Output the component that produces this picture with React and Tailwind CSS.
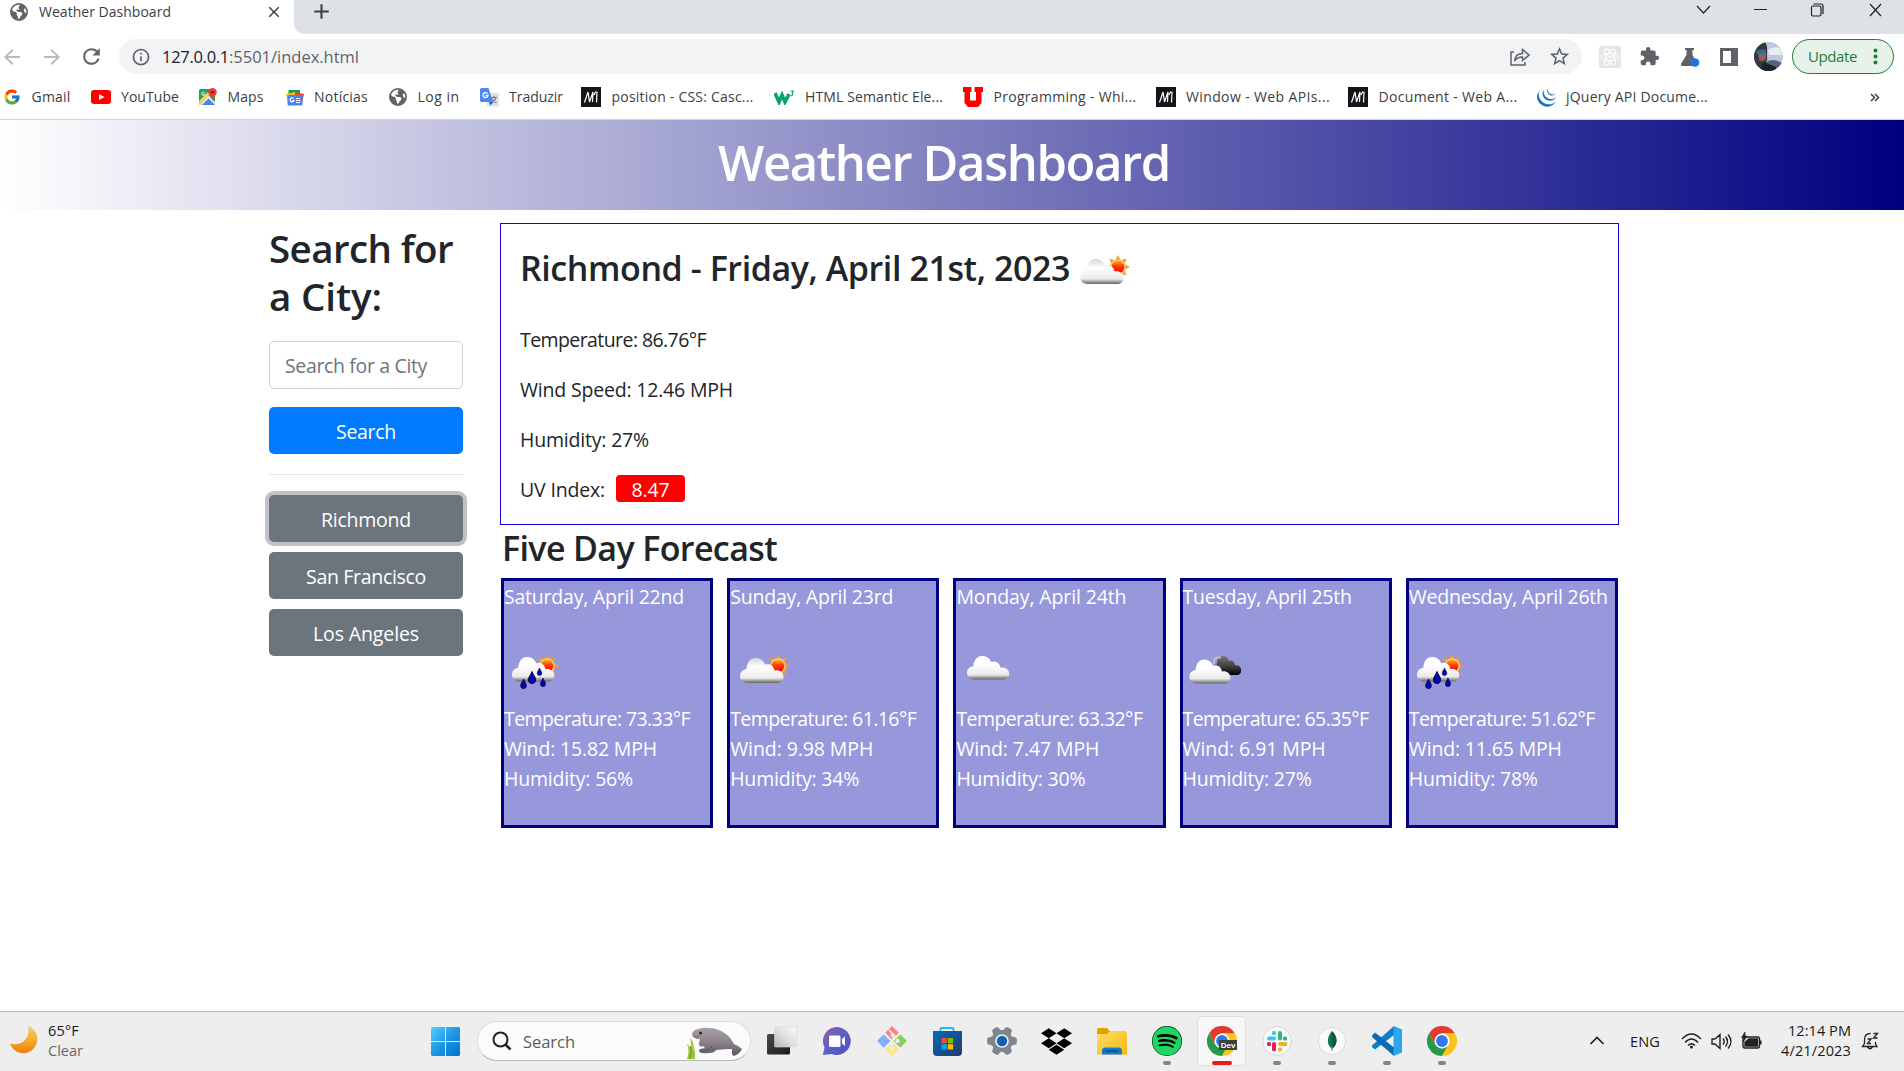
import { useId, useLayoutEffect, useRef, useState } from "react";
import { FcGoogle } from "react-icons/fc";
import { FaDropbox, FaSpotify } from "react-icons/fa";
import { FaEarthAmericas } from "react-icons/fa6";
import {
  MdArrowBack, MdArrowForward, MdClose, MdAdd, MdRefresh, MdInfoOutline, MdStarBorder, MdExtension,
} from "react-icons/md";
import { SiJquery } from "react-icons/si";

/* A single line of text spaced out to an exact width. */
function T({ w, className = "", children }) {
  const ref = useRef(null);
  const [ls, setLs] = useState(0);
  useLayoutEffect(() => {
    const natural = ref.current.getBoundingClientRect().width;
    setLs((w - natural) / Math.max(1, String(children).length));
  }, [w, children]);
  return (
    <span className={`block shrink-0 whitespace-nowrap ${className}`} style={{ width: w }}>
      <span ref={ref} className="inline-block" style={{ letterSpacing: ls }}>{children}</span>
    </span>
  );
}

/* ---------- weather icons ---------- */
const CLOUD = "M8 25C3 25 0 22 0 18C0 14 3 11.500 6.500 11C7 4.500 10 0 15.500 0C20.500 0 23.500 2.500 25 6.500C29.500 4.500 34 8 34.500 12.500C39 11.500 43.500 14 43.500 19C43.500 22.500 41 25 37.500 25Z";

function WeatherIcon({ kind }) {
  const id = useId();
  const sun = kind === "rain" ? [43, 26] : [48, 26];
  const hasSun = kind === "rain" || kind === "partly";
  const place = { rain: "translate(8 17) scale(.97 .98)", partly: "translate(10 18)", cloud: "translate(11 16) scale(.97 .94)", broken: "translate(6.500 19.500) scale(.94 .96)" }[kind];
  return (
    <svg width="62" height="62" viewBox="0 0 62 62" className="block shrink-0">
      <defs>
        <linearGradient id={id + "c"} x1="0" y1="0" x2="0" y2="1">
          <stop offset="0" stopColor={kind === "partly" ? "#d8d8d8" : "#ffffff"} />
          <stop offset=".35" stopColor="#ffffff" />
          <stop offset=".8" stopColor="#eaeaea" />
          <stop offset=".9" stopColor="#a5a5a5" />
          <stop offset="1" stopColor="#666666" />
        </linearGradient>
        <linearGradient id={id + "s"} x1="0" y1="0" x2="0" y2="1">
          <stop offset="0" stopColor="#ffb400" />
          <stop offset=".45" stopColor="#ff3a00" />
          <stop offset="1" stopColor="#f00000" />
        </linearGradient>
        <linearGradient id={id + "d"} x1="0" y1="0" x2="0" y2="1">
          <stop offset="0" stopColor="#777" />
          <stop offset=".5" stopColor="#444" />
          <stop offset="1" stopColor="#000" />
        </linearGradient>
      </defs>
      {hasSun && (
        <g transform={`translate(${sun[0]} ${sun[1]})`}>
          {[0, 45, 90, 135, 180, 225, 270, 315].map((a) => (
            <path key={a} d="M-2.500 -7L0 -12L2.500 -7Z" fill="#f5a01c" transform={`rotate(${a})`} />
          ))}
          <circle r="7.800" fill="#f9c487" />
          <circle r="6.300" fill={`url(#${id}s)`} />
        </g>
      )}
      {kind === "broken" && <path d={CLOUD} fill={`url(#${id}d)`} transform="translate(29.500 16) scale(.66 .76)" />}
      {kind === "broken" && <path d="M31 24C30 19 34 16 38 18" fill="none" stroke="#c8c8c8" strokeWidth="1.500" />}
      <path d={CLOUD} fill={`url(#${id}c)`} transform={place} />
      {kind === "rain" &&
        [[19.500, 39, 0.95], [28, 31.500, 1.200], [35.500, 28, 0.75], [39, 38, 0.85]].map(([x, y, s]) => (
          <path key={x} d="M0 0C1 3 3 4.500 3 7A3 3 0 0 1 -3 7C-3 4.500 -1 3 0 0Z" fill="#0505a8" stroke="#00004f" strokeWidth=".8" transform={`translate(${x} ${y}) scale(${s})`} />
        ))}
    </svg>
  );
}

/* ---------- bookmark icons ---------- */
const YouTube = () => (
  <svg width="20" height="14" viewBox="0 0 20 14"><rect width="20" height="14" rx="3" fill="#f00" /><path d="M8 4L13.500 7L8 10Z" fill="#fff" /></svg>
);
const Maps = () => (
  <svg width="18" height="18" viewBox="0 0 18 18">
    <rect y="1" width="16" height="16" rx="1.500" fill="#1fa463" />
    <path d="M0 16L9 7L16 14V17H1Z" fill="#e8e8e8" />
    <path d="M3 17L9.500 10.500L16 17Z" fill="#4285f4" />
    <path d="M0 13L9 4L11 6L1 17H0Z" fill="#ffd04b" />
    <path d="M13.500 0A4.300 4.300 0 0 1 17.800 4.300C17.800 7.500 14 8.500 13.500 13C13 8.500 9.200 7.500 9.200 4.300A4.300 4.300 0 0 1 13.500 0Z" fill="#ea4335" />
    <circle cx="13.500" cy="4.300" r="1.500" fill="#8c1b12" />
    <path d="M5.500 4.500A1.700 1.700 0 1 0 6 6H4.500" stroke="#fff" strokeWidth=".9" fill="none" />
  </svg>
);
const News = () => (
  <svg width="18" height="17" viewBox="0 0 18 17">
    <path d="M2.500 1H14V7H2.500Z" fill="#0f9d58" /><path d="M0 5L9 3V12L1.500 12Z" fill="#fbbc04" /><path d="M18 5L9 3V12L16.500 12Z" fill="#ea4335" />
    <rect x="1.500" y="6" width="15" height="10.500" rx="1.500" fill="#4285f4" />
    <path d="M7.500 9.500A2 2 0 1 0 8 11.500H6.200M10 9.500H14M10 11.500H14.500M10 13.500H14" stroke="#fff" strokeWidth="1.200" fill="none" />
  </svg>
);
const Translate = () => (
  <svg width="19" height="19" viewBox="0 0 19 19">
    <rect x="7" y="5" width="12" height="13.500" rx="1.500" fill="#dfe1e5" />
    <path d="M11 9.500H17M14 8V9.500M16 9.500C15.500 12 13.500 14 12 15M12.500 11C13.500 13 15 14.500 16.500 15" stroke="#6b7177" strokeWidth="1.100" fill="none" />
    <path d="M1.500 0H8.500L13 14H1.500A1.500 1.500 0 0 1 0 12.500V1.500A1.500 1.500 0 0 1 1.500 0Z" fill="#4d88f1" />
    <path d="M9 14H13L10.500 17.500Z" fill="#2a56c6" />
    <path d="M7.500 5.500A2.500 2.500 0 1 0 8 7.500H5.500" stroke="#fff" strokeWidth="1.300" fill="none" />
  </svg>
);
const Mdn = () => (
  <svg width="20" height="20" viewBox="0 0 20 20"><rect width="20" height="20" fill="#15141a" /><path d="M3.500 15.500L7 5L8.500 15L12 5L11.500 15M13 8L14.500 5H16L15.500 15.500" stroke="#fff" strokeWidth="1.200" fill="none" strokeLinejoin="bevel" /></svg>
);
const W3 = () => (
  <svg width="21" height="15" viewBox="0 0 21 15"><path d="M1 3L5 12L8 5L11 12L15 4" stroke="#04a56c" strokeWidth="3.600" fill="none" /><path d="M16.500 1H19.500L18 3A1.400 1.400 0 1 1 16.500 5.500" stroke="#04a56c" strokeWidth="1.100" fill="none" /></svg>
);
const UIcon = () => (
  <svg width="20" height="20" viewBox="0 0 20 20"><path d="M0 0H8.500V5H7V13.500H13V5H11.500V0H20V5H18.500V16L15 20H5L1.500 16V5H0Z" fill="#f00" /></svg>
);
const Globe = () => <FaEarthAmericas size={18} color="#5f6368" />;

const bookmarks = [
  { x: "ml-[3px]", Icon: () => <FcGoogle size={18} />, t: "Gmail", w: 39 },
  { x: "ml-[20px]", Icon: YouTube, t: "YouTube", w: 58 },
  { x: "ml-[20px]", Icon: Maps, t: "Maps", w: 36 },
  { x: "ml-[22px]", Icon: News, t: "Notícias", w: 54 },
  { x: "ml-[21px]", Icon: Globe, t: "Log in", w: 42 },
  { x: "ml-[20px]", Icon: Translate, t: "Traduzir", w: 54 },
  { x: "ml-[18px]", Icon: Mdn, t: "position - CSS: Casc...", w: 142 },
  { x: "ml-[20px]", Icon: W3, t: "HTML Semantic Ele...", w: 138 },
  { x: "ml-[20px]", Icon: UIcon, t: "Programming - Whi...", w: 143 },
  { x: "ml-[19px]", Icon: Mdn, t: "Window - Web APIs...", w: 144 },
  { x: "ml-[18px]", Icon: Mdn, t: "Document - Web A...", w: 139 },
  { x: "ml-[19px]", Icon: () => <SiJquery size={19} color="#1b75bb" />, t: "jQuery API Docume...", w: 142 },
];

function Browser() {
  return (
    <header className="bg-white">
      <div className="flex h-[34px] bg-[#dee1e6]">
        <div className="flex h-[34px] w-[294px] shrink-0 bg-white">
          <div className="mt-[3px] ml-[10px]"><Globe /></div>
          <T w={132} className="ml-[11px] h-6 text-[14px] leading-6 text-[#3c4043]">Weather Dashboard</T>
          <MdClose size={18} className="mt-[3px] ml-[94px] text-[#3c4043]" />
        </div>
        <div className="flex grow bg-white">
          <div className="flex grow rounded-bl-[10px] bg-[#dee1e6]">
            <MdAdd size={25} className="-mt-px ml-[15px] text-[#3c4043]" />
            <svg className="mt-[3px] ml-auto mr-[22px]" width="187" height="15" viewBox="0 0 187 15" fill="none" stroke="#222" strokeWidth="1.200">
              <path d="M2 3L8.500 10L15 3M59 6.500H72M175 1L186 13M186 1L175 13" />
              <rect x="116.500" y="3" width="9.500" height="10" rx="1.500" />
              <path d="M118.500 1H126A2 2 0 0 1 128 3V11" />
            </svg>
          </div>
        </div>
      </div>
      <div className="flex h-[45px] items-center">
        <MdArrowBack size={24} className="shrink-0 text-[#babcbe]" />
        <MdArrowForward size={24} className="ml-4 shrink-0 text-[#babcbe]" />
        <MdRefresh size={25} className="ml-[15px] shrink-0 text-[#5f6368]" />
        <div className="ml-[15px] flex h-[35px] w-[1463px] shrink-0 items-center rounded-full bg-[#f1f3f4] text-[#5f6368]">
          <MdInfoOutline size={20} className="ml-3 shrink-0" />
          <div className="ml-[11px] flex text-[16.5px] leading-6">
            <T w={67} className="text-[#202124]">127.0.0.1</T>
            <T w={130}>:5501/index.html</T>
          </div>
          <svg className="ml-auto" width="20" height="18" viewBox="0 0 20 18" fill="none" stroke="#5f6368" strokeWidth="1.500"><path d="M4 4H1V17H15V14M4.500 13C5 8 8 5.500 12.500 5.500V1.500L19 7L12.500 12.500V9C9 9 6.500 10 4.500 13Z" /></svg>
          <MdStarBorder size={23} className="mr-[11px] ml-[18px]" />
        </div>
        <svg className="ml-[17px] shrink-0" width="22" height="22" viewBox="0 0 22 22"><rect width="22" height="22" rx="2" fill="#e6e6e6" /><g fill="none" stroke="#fff"><ellipse cx="11" cy="11" rx="9" ry="3.600" /><ellipse cx="11" cy="11" rx="9" ry="3.600" transform="rotate(60 11 11)" /><ellipse cx="11" cy="11" rx="9" ry="3.600" transform="rotate(120 11 11)" /><circle cx="11" cy="11" r="1.300" /></g></svg>
        <MdExtension size={21} className="ml-[18px] shrink-0 text-[#5f6368]" />
        <svg className="ml-[20px] shrink-0" width="20" height="20" viewBox="0 0 20 20"><path d="M5 1H14V3H12.500V8L17 16.500C17.500 18 17 19 15.500 19H2.500C1 19 .5 18 1.200 16.500L6.500 8V3H5Z" fill="#5f6368" /><circle cx="15" cy="15.500" r="4.300" fill="#1a73e8" /></svg>
        <div className="ml-[20px] flex h-[18px] w-[18px] shrink-0 border-[3px] border-r-[7px] border-[#5f6368]" />
        <svg className="ml-[16px] shrink-0" width="29" height="29" viewBox="0 0 29 29">
          <defs><clipPath id="av"><circle cx="14.500" cy="14.500" r="14.500" /></clipPath></defs>
          <g clipPath="url(#av)"><rect width="29" height="29" fill="#b9c8db" /><path d="M14 8Q20 3 29 7V13H15Z" fill="#e9edf3" /><path d="M12 20Q20 15 29 22V29H12Z" fill="#55637a" /><path d="M0 0H11C14 4 13 9 13 14Q14 20 10 22L15 29H0Z" fill="#39373a" /><path d="M4 9Q10 5 12 10V17Q8 21 5 18Z" fill="#85635a" /><path d="M1 9L12 8V11L4 12Z" fill="#1c78a8" /><path d="M10 20L22 25V29H5Z" fill="#1d222c" /></g>
        </svg>
        <div className="ml-[9px] flex h-[35px] w-[102px] shrink-0 items-center rounded-full border-[1.5px] border-[#188038] bg-[#e8f2eb] text-[#188038]">
          <T w={49} className="ml-[15px] pb-[2px] text-[15px] leading-6">Update</T>
          <svg className="ml-[16px]" width="5" height="17" fill="#188038"><circle cx="2.500" cy="2.500" r="2" /><circle cx="2.500" cy="8.500" r="2" /><circle cx="2.500" cy="14.500" r="2" /></svg>
        </div>
      </div>
      <div className="flex h-[41px] items-center border-b border-[#d0d2d6] pb-[4px]">
        {bookmarks.map(({ x, Icon, t, w }, i) => (
          <div key={i} className={`flex shrink-0 items-center ${x}`}>
            <Icon />
            <T w={w} className="ml-[10.5px] text-[14px] leading-6 text-[#3c4043]">{t}</T>
          </div>
        ))}
        <svg className="mr-6 ml-auto" width="10" height="9" viewBox="0 0 10 9" fill="none" stroke="#3c4043" strokeWidth="1.500"><path d="M1 1L4.500 4.500L1 8M5 1L8.500 4.500L5 8" /></svg>
      </div>
    </header>
  );
}

const cities = [["Richmond", 90], ["San Francisco", 120], ["Los Angeles", 106]];
const days = [
  ["Saturday, April 22nd", 180, "rain", "73.33", "15.82", 153, "56"],
  ["Sunday, April 23rd", 163, "partly", "61.16", "9.98", 143, "34"],
  ["Monday, April 24th", 170, "cloud", "63.32", "7.47", 143, "30"],
  ["Tuesday, April 25th", 169, "broken", "65.35", "6.91", 143, "27"],
  ["Wednesday, April 26th", 199, "rain", "51.62", "11.65", 153, "78"],
];

function Dashboard() {
  return (
    <main className="h-[891px] bg-white text-[19.5px] leading-[30px] text-[#212529]">
      <div className="h-[90px] bg-linear-to-r/srgb from-white to-[#000080] pt-[12px] pl-[718px]">
        <T w={452} className="text-[49px] leading-[60px] font-semibold text-white">Weather Dashboard</T>
      </div>
      <div className="flex pl-[269px]">
        <aside className="w-[194px] shrink-0 pt-[14px]">
          <h2 className="text-[38.5px] leading-[48px] font-semibold">
            <T w={184}>Search for</T>
            <T w={113}>a City:</T>
          </h2>
          <input className="mt-[21px] block h-12 w-full rounded-[5px] border border-[#ced4da] px-[15px] pt-px tracking-[-0.35px] placeholder:text-[#6c757d]" placeholder="Search for a City" />
          <button className="mt-[18px] flex h-[47px] w-full items-center justify-center rounded-[5px] bg-[#007bff] pt-[2px] text-white"><T w={60}>Search</T></button>
          <div className="mt-5 h-px bg-[#e5e5e5]" />
          <div className="mt-5 flex flex-col gap-[10px]">
            {cities.map(([c, w], i) => (
              <button key={c} className={`flex h-[47px] w-full items-center justify-center rounded-[5px] bg-[#6c757d] pt-[2px] text-white ${i === 0 ? "ring-4 ring-[#bfc3c7]" : ""}`}><T w={w}>{c}</T></button>
            ))}
          </div>
        </aside>
        <section className="ml-[37px] w-[1119px] shrink-0 pt-[13px]">
          <div className="h-[302px] border border-[#1400e6] pl-[19px]">
            <div className="flex pt-[17px]">
              <T w={550} className="pt-[6px] text-[34px] leading-[42px] font-semibold">Richmond - Friday, April 21st, 2023</T>
              <WeatherIcon kind="partly" />
            </div>
            <div className="mt-[22px] flex flex-col gap-5">
              <T w={186}>Temperature: 86.76°F</T>
              <T w={213}>Wind Speed: 12.46 MPH</T>
              <T w={129}>Humidity: 27%</T>
              <div className="flex">
                <T w={85}>UV Index:</T>
                <div className="ml-[11px] flex h-[27px] w-[69px] items-center justify-center rounded-[4px] bg-[#ff0000] pt-[3px] text-white"><T w={38} className="font-medium">8.47</T></div>
              </div>
            </div>
          </div>
          <T w={275} className="ml-[2px] pt-[2px] text-[34px] leading-[42px] font-semibold">Five Day Forecast</T>
          <div className="mt-[9px] ml-px grid w-[1117px] grid-cols-5 gap-[14px] text-white">
            {days.map(([d, w, kind, temp, wind, ww, hum]) => (
              <div key={d} className="h-[250px] border-[3px] border-[#000080] bg-[#9797dc]">
                <T w={w} className="pt-px">{d}</T>
                <div className="h-[92px] pt-[28px]"><WeatherIcon kind={kind} /></div>
                <T w={186}>{`Temperature: ${temp}°F`}</T>
                <T w={ww}>{`Wind: ${wind} MPH`}</T>
                <T w={129}>{`Humidity: ${hum}%`}</T>
              </div>
            ))}
          </div>
        </section>
      </div>
    </main>
  );
}

/* ---------- taskbar ---------- */
function Chrome({ dev }) {
  return (
    <svg width="30" height="30" viewBox="0 0 30 30">
      <path d="M2 7.500A15 15 0 0 1 28 7.500H15L8.500 18.750Z" fill="#e33b2e" />
      <path d="M2 7.500L8.500 18.750L15 22.500L21.500 18.750L15 30A15 15 0 0 1 2 7.500Z" fill="#269a46" />
      <path d="M28 7.500A15 15 0 0 1 15 30L21.500 18.750L15 7.500Z" fill="#fcc419" />
      <circle cx="15" cy="15" r="7.500" fill="#fff" /><circle cx="15" cy="15" r="5.900" fill="#2f78ee" />
      {dev && <g><rect x="12" y="14" width="18" height="10" fill="#3c4043" /><text x="21" y="21.700" textAnchor="middle" fontSize="8" fontWeight="700" fontFamily="Liberation Sans, sans-serif" fill="#fff">Dev</text></g>}
    </svg>
  );
}

const TaskView = () => (
  <svg width="30" height="30" viewBox="0 0 30 30">
    <defs><linearGradient id="tvd" x1="0" y1="0" x2="1" y2="1"><stop stopColor="#4a4a48" /><stop offset="1" stopColor="#1a1a1a" /></linearGradient><linearGradient id="tvl" x1="0" y1="1" x2="1" y2="0"><stop stopColor="#b4b4b4" /><stop offset=".5" stopColor="#e0e0e0" /><stop offset="1" stopColor="#fbfbfb" /></linearGradient></defs>
    <rect y="8" width="23" height="20.500" rx="1.500" fill="url(#tvd)" /><rect x="7.500" y="1" width="22" height="20" rx="1" fill="url(#tvl)" stroke="#d8d8d8" strokeWidth=".6" />
  </svg>
);
const Chat = () => (
  <svg width="30" height="30" viewBox="0 0 30 30">
    <defs><linearGradient id="ch" x1="0" y1="0" x2="1" y2="1"><stop stopColor="#9b5fa8" /><stop offset=".5" stopColor="#5b5fc7" /><stop offset="1" stopColor="#4b50c0" /></linearGradient></defs>
    <path d="M15 1A14 14 0 1 1 9.500 28L.8 29L2.500 21.500A14 14 0 0 1 15 1Z" fill="url(#ch)" /><rect x="7" y="9.500" width="11.500" height="11.500" rx="1.500" fill="#fff" /><path d="M20 13L23 10.500V20L20 17.500Z" fill="#fff" />
  </svg>
);
const Git = () => (
  <svg width="30" height="30" viewBox="0 0 30 30">
    <path d="M15 0L21.700 6.700L15 13.500L8.300 6.700Z" fill="#ff7f7f" /><path d="M23.300 8.300L30 15L23.300 21.700L16.500 15Z" fill="#8bd05d" /><path d="M6.700 8.300L13.500 15L6.700 21.700L0 15Z" fill="#80b3ff" /><path d="M15 16.500L21.700 23.300L15 30L8.300 23.300Z" fill="#ffe680" />
    <path d="M12 4L16 8V13M16 8L20 12M15 17V22" stroke="#ededed" strokeWidth="1.700" fill="none" /><circle cx="15.500" cy="9" r="2" fill="#ededed" /><circle cx="20.500" cy="15" r="2.300" fill="#ededed" /><circle cx="15" cy="22" r="2.200" fill="#ededed" />
  </svg>
);
const Store = () => (
  <svg width="30" height="30" viewBox="0 0 30 30">
    <defs><linearGradient id="st" x1="0" y1="0" x2="1" y2="1"><stop stopColor="#0669bd" /><stop offset="1" stopColor="#243a63" /></linearGradient></defs>
    <path d="M8.500 6V3A1 1 0 0 1 9.500 2H20.500A1 1 0 0 1 21.500 3V6" stroke="#2db7f0" strokeWidth="2" fill="none" /><path d="M1 5H30V26A4 4 0 0 1 26 30H5A4 4 0 0 1 1 26Z" fill="url(#st)" />
    <rect x="9.500" y="12" width="5.300" height="5.300" fill="#f25022" /><rect x="15.800" y="12" width="5.300" height="5.300" fill="#7fba00" /><rect x="9.500" y="18.200" width="5.300" height="5.300" fill="#00a4ef" /><rect x="15.800" y="18.200" width="5.300" height="5.300" fill="#ffb900" />
  </svg>
);
const Gear = () => (
  <svg width="30" height="30" viewBox="0 0 30 30">
    <g fill="#7f868d">{[30, 90, 150, 210, 270, 330].map((a) => <path key={a} d="M10 7L11.800 .7Q15 -.6 18.200 .7L20 7Z" transform={`rotate(${a} 15 15)`} />)}<circle cx="15" cy="15" r="10.800" /></g>
    <circle cx="15" cy="15" r="6.800" fill="#f2f4f6" /><circle cx="15" cy="15" r="5.200" fill="#1062b4" />
  </svg>
);
const Folder = () => (
  <svg width="30" height="30" viewBox="0 0 30 30">
    <defs><linearGradient id="fo" x1="0" y1="0" x2="1" y2="1"><stop stopColor="#ffdb6b" /><stop offset="1" stopColor="#f9b80c" /></linearGradient></defs>
    <path d="M0 3.500A1.500 1.500 0 0 1 1.500 2H10L13 5.500V9H0Z" fill="#dfa000" /><path d="M0 8H10L13.500 5H28.500A1.500 1.500 0 0 1 30 6.500V28.500H0Z" fill="url(#fo)" /><path d="M5 28.500V24A3 3 0 0 1 8 21.500H22A3 3 0 0 1 25 24V28.500Z" fill="#1478cf" /><path d="M8.500 25H21.500" stroke="#084a8b" strokeWidth="1.300" />
  </svg>
);
const Slack = () => (
  <svg width="30" height="30" viewBox="0 0 30 30">
    <circle cx="15" cy="15" r="14.300" fill="#fafafa" stroke="#d5d5d5" />
    <rect x="5" y="10.500" width="9" height="4" rx="2" fill="#36c5f0" /><rect x="10" y="5" width="4" height="4" rx="1.500" fill="#36c5f0" />
    <rect x="16" y="5" width="4" height="9.500" rx="2" fill="#2eb67d" /><rect x="21" y="10.500" width="4" height="4" rx="1.500" fill="#2eb67d" />
    <rect x="16" y="16" width="9.500" height="4" rx="2" fill="#ecb22e" /><rect x="16" y="21.500" width="4" height="4" rx="1.500" fill="#ecb22e" />
    <rect x="10" y="16" width="4" height="9.500" rx="2" fill="#e01e5a" /><rect x="5" y="16" width="4" height="4" rx="1.500" fill="#e01e5a" />
  </svg>
);
const Mongo = () => (
  <svg width="30" height="30" viewBox="0 0 30 30"><circle cx="15" cy="15" r="13.700" fill="#fafafa" stroke="#d8d8d8" /><path d="M15 5C21 11 21 18 15 23C9 18 10 11 15 5Z" fill="#10744f" /><path d="M15 5C21 11 21 18 15 23Z" fill="#0a5a3e" /><path d="M15 20V25" stroke="#6d8d7c" /></svg>
);
const Code = () => (
  <svg width="30" height="30" viewBox="0 0 30 30"><path d="M22 0V9L3 23.500L0 21V19.500Z" fill="#0f7fcb" /><path d="M3 6.500L22 21.500V30L0 11V9.500Z" fill="#0a6cb4" /><path d="M21.500 0L30 3.500V26.500L21.500 30V22V8Z" fill="#2aa5f2" /></svg>
);

const apps = [
  [TaskView, 0], [Chat, 0], [Git, 0], [Store, 0], [Gear, 0],
  [() => <FaDropbox size={31} color="#000" />, 0], [Folder, 0],
  [() => <span className="rounded-full bg-black"><FaSpotify size={30} color="#1ed760" /></span>, 1],
  [() => <Chrome dev />, 2], [Slack, 1], [Mongo, 1], [Code, 1], [() => <Chrome />, 1],
];

function Taskbar() {
  return (
    <footer className="flex h-[60px] border-t border-[#b9bbbc] bg-[#eeeeee] text-[14.5px] leading-5 text-[#1a1a1a]">
      <svg className="mt-[14px] ml-[10px] shrink-0" width="29" height="29" viewBox="0 0 29 29">
        <defs><linearGradient id="mo" x1="0" y1="0" x2="0" y2="1"><stop stopColor="#f7c77a" /><stop offset=".5" stopColor="#f3b02f" /><stop offset="1" stopColor="#ef7a12" /></linearGradient></defs>
        <path d="M18 0A14 14 0 1 1 0 17.500Q6 19.500 12 16.500Q20.500 11 18 0Z" fill="url(#mo)" />
      </svg>
      <div className="mt-[9px] ml-[9px] w-[60px]">
        <T w={31}>65°F</T>
        <T w={35} className="text-[#686868]">Clear</T>
      </div>
      <svg className="mt-[15px] ml-[323px] shrink-0" width="30" height="30" viewBox="0 0 30 30">
        <defs><linearGradient id="wi" x1="0" y1="0" x2="1" y2="1"><stop stopColor="#4fd2ff" /><stop offset=".5" stopColor="#1d97e2" /><stop offset="1" stopColor="#0072d2" /></linearGradient></defs>
        <path d="M1 0H14V14H0V1ZM15 0H28L29 1V14H15ZM0 15H14V29H1L0 28ZM15 15H29V28L28 29H15Z" fill="url(#wi)" />
      </svg>
      <div className="mt-[9px] ml-[16px] flex h-10 w-[274px] shrink-0 rounded-full border border-b-[#bbb] border-[#dedede] bg-[#fbfbfb]">
        <svg className="mt-[9px] ml-[14px]" width="20" height="20" viewBox="0 0 20 20" fill="none" stroke="#222" strokeWidth="2"><circle cx="8.500" cy="8.500" r="7" /><path d="M13.500 13.500L18.500 18.500" strokeWidth="2.500" /></svg>
        <T w={52} className="mt-[10px] ml-[11px] text-[16.5px] text-[#5c5c5c]">Search</T>
        <svg className="mt-[4px] ml-[111px]" width="58" height="34" viewBox="0 0 58 34">
          <defs><linearGradient id="ma" x1="0" y1="0" x2="0" y2="1"><stop stopColor="#a99fa9" /><stop offset=".5" stopColor="#8d828c" /><stop offset="1" stopColor="#5f5861" /></linearGradient></defs>
          <path d="M1 33Q4 25 1 18Q5 21 5 25Q6 18 4 12Q9 17 7.500 26L9 22V33Z" fill="#9bc53a" /><path d="M4 33Q6 26 4.500 20" stroke="#638f18" fill="none" />
          <path d="M6 9Q6 4 12 3Q22 0 33 4Q43 8 48 18Q53 20 56 23Q53 29 47 30Q45 27 46 23Q38 23 30 24Q28 28 16 27Q11 26 14 23L19 22L17 20Q13 22 13 17L14 13Q9 14 6 9Z" fill="url(#ma)" />
          <path d="M14 24Q22 26 26 20" stroke="#5c5560" fill="none" /><circle cx="14.500" cy="7" r="1.600" fill="#2b2630" /><path d="M7 10Q10 12 13 10" stroke="#6d6470" fill="none" />
        </svg>
      </div>
      <div className="ml-[3px] flex shrink-0">
        {apps.map(([Icon, state], i) => (
          <div key={i} className="flex h-[59px] w-[55.05px] flex-col items-center pt-1">
            <div className={`flex h-[50px] w-[49px] flex-col items-center rounded-[5px] ${state === 2 ? "border border-[#dddddd] bg-[#f7f7f7] pt-[9px]" : "pt-[10px]"}`}>
              <div className="flex h-[30px] items-center"><Icon /></div>
              {state === 1 && <div className="mt-[5px] h-1 w-2 shrink-0 rounded-full bg-[#858585]" />}
              {state === 2 && <div className="mt-[5px] h-1 w-5 shrink-0 rounded-full bg-[#e81c1c]" />}
            </div>
          </div>
        ))}
      </div>
      <div className="ml-auto flex shrink-0">
        <svg className="mt-[23px]" width="16" height="11" viewBox="0 0 16 11" fill="none" stroke="#222" strokeWidth="1.700"><path d="M1.500 9L8 2.500L14.500 9" /></svg>
        <T w={30} className="mt-[20px] ml-[25px]">ENG</T>
        <svg className="mt-[20px] ml-[21px]" width="82" height="19" viewBox="0 0 82 19" fill="none" stroke="#222" strokeWidth="1.400">
          <path d="M1 7Q10.500 -3 20 7M4 10.500Q10.500 3.500 17 10.500M7 13.500Q10.500 10 14 13.500" /><circle cx="10.500" cy="15" r="1.500" fill="#222" stroke="none" />
          <path d="M31 7H34L39 2.500V16.500L34 12H31ZM42 6.500Q44.500 9.500 42 12.500M44.500 4.500Q48.500 9.500 44.500 14.500M47 2.500Q53 9.500 47 16.500" />
          <rect x="62" y="5" width="16.500" height="11" rx="2" /><path d="M68 7H76.500V14H64V10Z" fill="#222" /><path d="M79.500 8.500V12.500" strokeWidth="2" /><path d="M64 0L60.500 5.500H63L62 10L66.500 4H64Z" fill="#222" strokeWidth=".6" />
        </svg>
        <div className="mt-[9px] ml-[18px] flex w-[70px] flex-col items-end">
          <T w={63}>12:14 PM</T>
          <T w={70}>4/21/2023</T>
        </div>
        <svg className="mt-[20px] mr-[25px] ml-[10px]" width="18" height="20" viewBox="0 0 18 20" fill="none" stroke="#222" strokeWidth="1.300"><path d="M9.500 1.500C5.500 1.500 3.500 4 3.500 7.500V11.500L1.500 14.500H16L14.500 11.500V10M6.500 15Q9 18.500 11.500 15M6.500 7H10L6.500 11.500H10M12.500 1.500H16.500L12.500 6H16.500" /></svg>
      </div>
    </footer>
  );
}

export default function App() {
  return (
    <div className="flex h-[1071px] w-[1904px] flex-col overflow-hidden bg-white font-['Open_Sans','Noto_Sans',sans-serif]">
      <Browser />
      <Dashboard />
      <Taskbar />
    </div>
  );
}
